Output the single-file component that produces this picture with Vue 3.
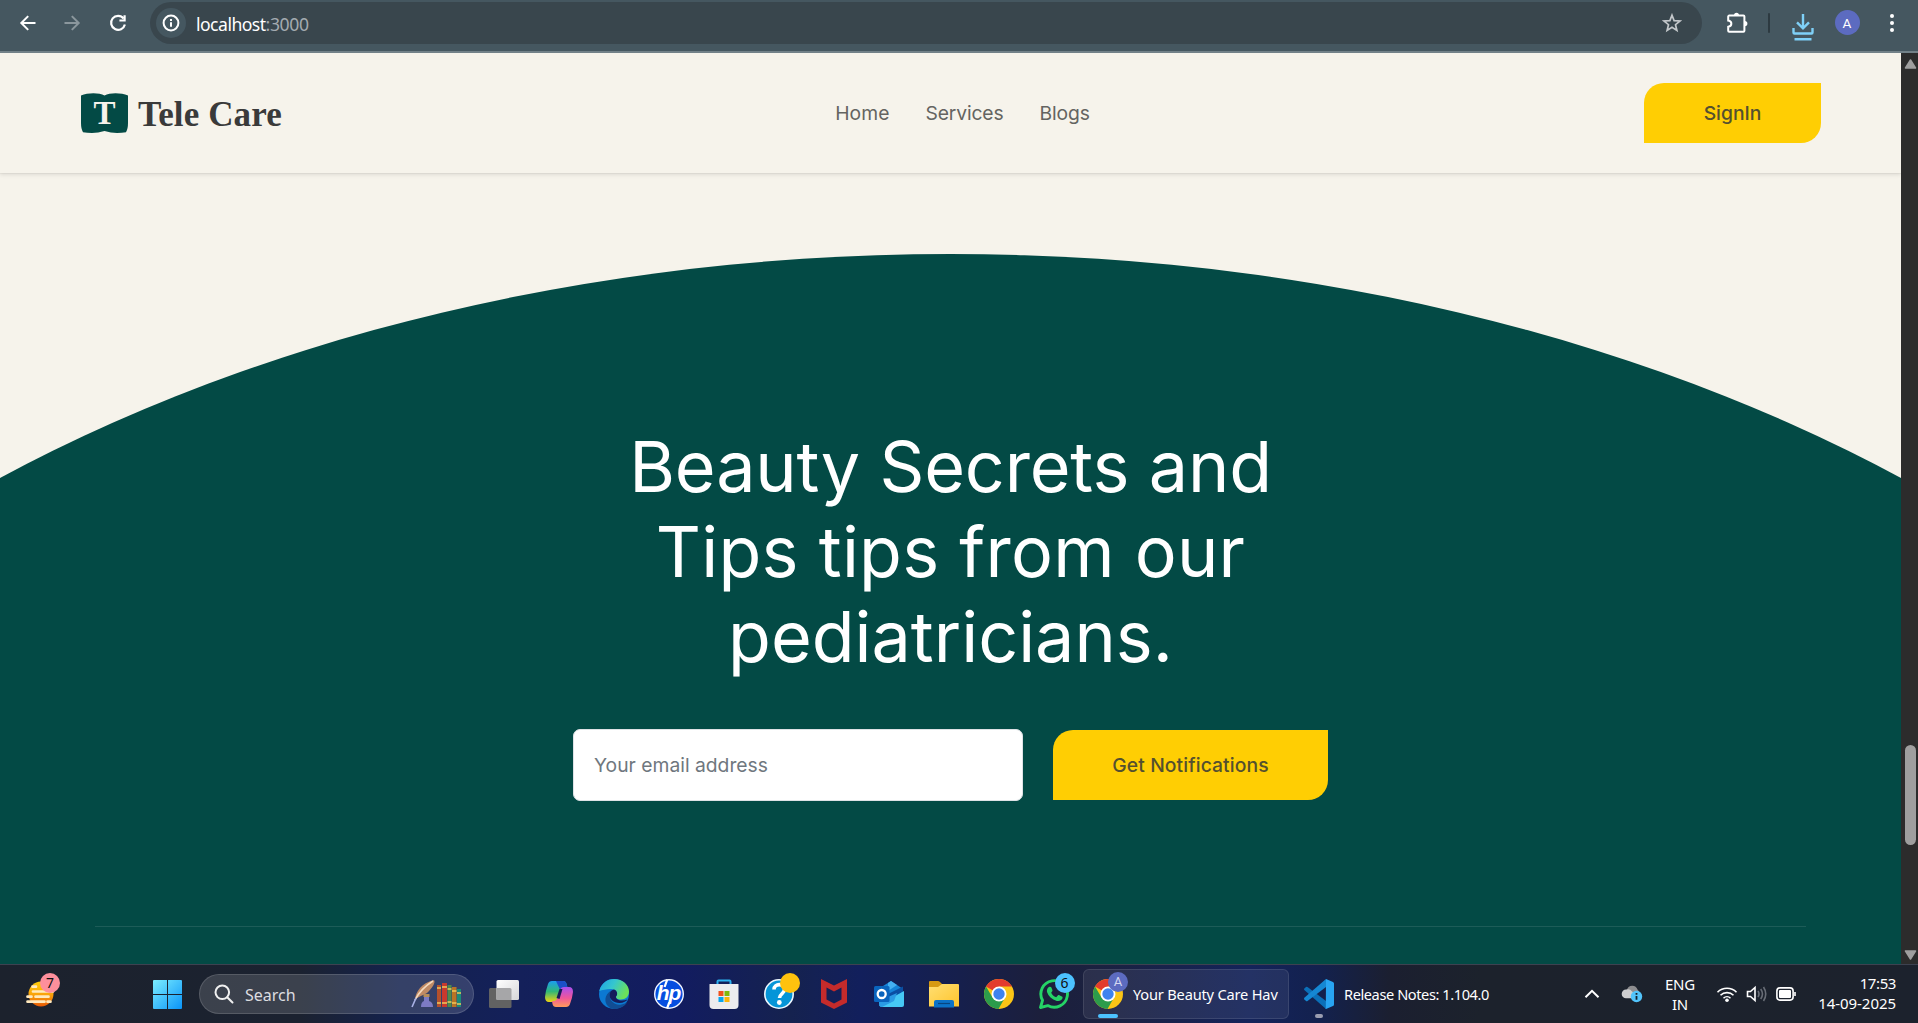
<script setup>
const links = ['Home', 'Services', 'Blogs']
const headline = [
  { text: 'Beauty Secrets and', cls: 'tight' },
  { text: 'Tips tips from our', cls: 'wide' },
  { text: 'pediatricians.', cls: 'last' },
]
</script>

<template>
  <div class="screen">
    <div class="toolbar">
      <svg class="ic back" viewBox="0 0 20 20"><path d="M17.500 10H3.800M10.200 3.100 3.300 10l6.900 6.900" /></svg>
      <svg class="ic fwd" viewBox="0 0 20 20"><path d="M2.500 10h13.700M9.800 3.100l6.900 6.900-6.900 6.900" /></svg>
      <svg class="ic reload" viewBox="0 0 20 20"><path d="M15.600 5.500A7 7 0 1 0 16.900 11.500" /><path d="M16.600 2.300v5.200h-5.200" /></svg>
      <div class="omnibox">
        <span class="info">
          <svg viewBox="0 0 20 20"><circle cx="10" cy="10" r="7.400" /><path d="M10 9.200v4.600M10 6v1.900" /></svg>
        </span>
        <span class="url"><b>localhost</b><i>:3000</i></span>
        <svg class="star" viewBox="0 0 20 20"><path d="M10 2.200l2.100 5.400 5.900.4-4.500 3.700 1.400 5.700-4.900-3.100-4.900 3.100 1.400-5.700L2 8l5.900-.4z" /></svg>
      </div>
      <svg class="ext" viewBox="0 0 22 22"><path class="line" d="M3.200 3.600h14.200a1 1 0 0 1 1 1v14.200a1 1 0 0 1-1 1H3.200a1 1 0 0 1-1-1v-4c4.200-.8 4.200-5.400 0-6.200v-4a1 1 0 0 1 1-1z" /><path class="solid" d="M8 3.200a2.500 2.500 0 0 1 5 0zM18.800 9a2.600 2.600 0 0 1 0 5.200z" /></svg>
      <span class="sep"></span>
      <svg class="dl" viewBox="0 0 22 28"><path d="M11 1v14M5 9.400l6 6 6-6M1.500 15v4.500a1 1 0 0 0 1 1h17a1 1 0 0 0 1-1V15M2.500 26.200h17" /></svg>
      <span class="avatar">A</span>
      <svg class="dots" viewBox="0 0 6 20"><circle cx="3" cy="3" r="2" /><circle cx="3" cy="10" r="2" /><circle cx="3" cy="17" r="2" /></svg>
    </div>

    <div class="viewport">
      <div class="page">
        <header class="header">
          <div class="logo">
            <svg viewBox="0 0 47 40"><path d="M0 2.500C7-.6 18-.6 23.500 2.400 29-.6 40-.6 47 2.500V30q0 6-2 9.200-4 .8-9 .8-6 0-12.500-2Q17 40 11 40q-5 0-9-.8Q0 36 0 30z" /><text x="23.500" y="31" text-anchor="middle">T</text></svg>
            <span class="brand">Tele Care</span>
          </div>
          <nav class="nav"><a v-for="l in links" :key="l" :class="l.toLowerCase()">{{ l }}</a></nav>
          <button class="btn sign">SignIn</button>
        </header>
        <section class="hero">
          <h1 class="title"><span v-for="h in headline" :key="h.text" :class="h.cls">{{ h.text }}</span></h1>
          <div class="form">
            <div class="field">Your email address</div>
            <button class="btn notify">Get Notifications</button>
          </div>
          <div class="rule"></div>
        </section>
      </div>
      <div class="scrollbar">
        <svg class="arrow" viewBox="0 0 12 10"><path d="M6 1 11 9H1z" /></svg>
        <div class="thumb"></div>
        <svg class="arrow down" viewBox="0 0 12 10"><path d="M6 9 1 1h10z" /></svg>
      </div>
    </div>

    <div class="taskbar">
      <div class="widget">
        <svg viewBox="0 0 30 30">
          <defs><linearGradient id="sun" x1="0" y1="0" x2="0" y2="1"><stop offset="0" stop-color="#ffcc0a" /><stop offset=".5" stop-color="#faa50a" /><stop offset="1" stop-color="#e85a06" /></linearGradient></defs>
          <circle cx="16" cy="15" r="12.500" fill="url(#sun)" />
          <path d="M7.500 7.700h3.500M8 12.500h20M2.500 17.700h4M10.500 17.700h13M2.500 22.700h17M22.500 22.700h3" stroke="#ffe9bd" stroke-width="2.700" stroke-linecap="round" />
        </svg>
        <span class="badge pink">7</span>
      </div>
      <svg class="start" viewBox="0 0 29 29">
        <defs><linearGradient id="win" x1="0" y1="0" x2="1" y2="1"><stop offset="0" stop-color="#7ceeff" /><stop offset="1" stop-color="#0a94f8" /></linearGradient></defs>
        <path fill="url(#win)" d="M1 0h13v14H0V1q0-1 1-1zM15 0h13q1 0 1 1v13H15zM0 15h14v14H1q-1 0-1-1zM15 15h14v13q0 1-1 1H15z" />
      </svg>
      <div class="search">
        <svg class="lens" viewBox="0 0 20 20"><circle cx="8.300" cy="8.300" r="6.800" /><path d="M13.200 13.200l5.300 5.300" /></svg>
        <span>Search</span>
        <svg class="books" viewBox="0 0 50 28">
          <path d="M4 19C5 12 10 3 23 0c2 3-2 8-7 13-3 2-7 3-10 5z" fill="#c08a64" />
          <path d="M4 20C8 12 14 6 22 1" stroke="#f4d9bd" stroke-width="1.600" fill="none" />
          <path d="M1 27l4-9" stroke="#a9b2e6" stroke-width="1.600" />
          <path d="M13 17h5v4q4 1 4 6H10q0-5 3-6z" fill="#7d7bc4" /><path d="M12.500 14h6v3h-6z" fill="#b78d5a" />
          <path d="M26 5h4v22h-4z" fill="#b4502c" /><path d="M31 3h5v24h-5z" fill="#c8392e" /><path d="M36.500 5h4v22h-4z" fill="#4d8a4c" /><path d="M41 7h4.500v20H41z" fill="#b87425" /><path d="M46 9h4v18h-4z" fill="#1b8a78" />
          <path d="M26 8h4M26 23h4M31 7h5M31 23h5M36.500 9h4M36.500 22h4M41 11h4.500M41 23h4.500M46 13h4M46 24h4" stroke="#efc75b" stroke-width="1.600" />
        </svg>
      </div>
      <div class="apps">
        <span class="slot">
          <svg viewBox="0 0 32 32"><defs><linearGradient id="tv" x1="0" y1="0" x2="1" y2="1"><stop offset="0" stop-color="#fff" /><stop offset="1" stop-color="#d7d7d9" /></linearGradient></defs><path d="M1 11.500q0-1.500 1.500-1.500H23.500V28.500q0 1.500-1.500 1.500H2.500Q1 30 1 28.500z" fill="#626262" /><rect x="8.500" y="2" width="22.500" height="20" rx="1.500" fill="url(#tv)" /><path d="M8.500 10h13.500q1.500 0 1.500 1.500V22h-15z" fill="#a6a6a8" /></svg>
        </span>
        <span class="slot">
          <svg viewBox="0 0 32 32">
            <defs>
              <linearGradient id="cp1" x1="0" y1="0" x2="0" y2="1"><stop offset="0" stop-color="#1c9df0" /><stop offset=".5" stop-color="#30b877" /><stop offset="1" stop-color="#efd411" /></linearGradient>
              <linearGradient id="cp2" x1="0" y1="0" x2="0" y2="1"><stop offset="0" stop-color="#a94ff0" /><stop offset=".55" stop-color="#f0569a" /><stop offset="1" stop-color="#ff9b5a" /></linearGradient>
            </defs>
            <path d="M9 3h11c2 0 3 1 3.600 3l1 4h-4q-2 0-3 3l-2.500 8q-1 3-4 3H6q-4 0-4-5 .5-6 3-13 1-3 4-3z" fill="url(#cp1)" />
            <path d="M13 3h7c2 0 3 1 3.600 3l1 4h-4q-2 0-3 3z" fill="#1b4fc8" />
            <path d="M23 29H13c-2 0-3-1-3.500-3L9 23h2.500q2 0 3-3l2.500-8q1-3 4-3h5q4 0 4 5-.5 5-3 12-1 3-4 3z" fill="url(#cp2)" />
            <path d="M13.500 20l3-9h3l-3 10z" fill="#141d56" />
          </svg>
        </span>
        <span class="slot">
          <svg viewBox="0 0 32 32">
            <defs><linearGradient id="ed" x1="0" y1="0" x2="1" y2=".4"><stop offset="0" stop-color="#1da4e6" /><stop offset=".5" stop-color="#35c6cf" /><stop offset="1" stop-color="#6be05a" /></linearGradient></defs>
            <circle cx="16" cy="16" r="15" fill="#0c79d2" />
            <path d="M1.300 13C3 5.500 9 1 16 1c9 0 15 6 15 12.500 0 5-3.500 8-8 8-3.500 0-5.500-1.500-5-3 2-1.500 1.500-7.500-5-7.500-5 0-9 1-11.700 2z" fill="url(#ed)" />
            <path d="M11.500 17c0 6 6 11 12 9.500 2.500-.6 4.500-1.700 5.700-2.300C26.500 28.500 21.500 31 16 31 9 30 6 24 8 18.500c1-3 3.500-5 6-6.500-1.500 1-2.500 3-2.500 5z" fill="#114d94" />
            <path d="M18 18.500c2-1.500 1.500-6-2-7-3 .5-4.500 3-4.500 5.500 0 4 4 8 10 8 4 0 7-2 8-3.500-7 2.500-12 0-11.500-3z" fill="#141c5c" />
          </svg>
        </span>
        <span class="slot">
          <svg viewBox="0 0 32 32"><circle cx="16" cy="16" r="14.300" fill="#064ee0" stroke="#f3f6ff" stroke-width="1.400" /><text class="hp" x="15.500" y="21.500" text-anchor="middle">hp</text><path d="M11.600 9l2.600-7.300M16.300 24.500l-2.300 6" stroke="#fff" stroke-width="2.200" /></svg>
        </span>
        <span class="slot">
          <svg viewBox="0 0 32 32"><path d="M9.500 7V3.500q0-1 1-1h11q1 0 1 1V7" fill="none" stroke="#2cb0ee" stroke-width="2" /><path d="M2 6h28q.5 0 .5.500V27q0 4-4 4h-21q-4 0-4-4V6.500Q1.500 6 2 6z" fill="#ececee" /><path d="M10.500 13h5v5h-5z" fill="#f1511b" /><path d="M16.500 13h5v5h-5z" fill="#80b80a" /><path d="M10.500 19h5v5h-5z" fill="#06a5ee" /><path d="M16.500 19h5v5h-5z" fill="#fbb50a" /></svg>
        </span>
        <span class="slot">
          <svg viewBox="0 0 32 32"><circle cx="16" cy="16" r="14.200" fill="#0595d8" stroke="#eef8ff" stroke-width="1.600" /><path d="M11 11.500c0-6.500 10.500-6.500 10.500 0 0 4-5 4.500-5 8.500" fill="none" stroke="#fff" stroke-width="3.600" /><circle cx="16.300" cy="24.500" r="2.400" fill="#fff" /></svg>
          <span class="badge amber"></span>
        </span>
        <span class="slot">
          <svg viewBox="0 0 32 32"><path d="M3 1l13 6.500L29 1v23.500L16 31 3 24.500zM8.500 9.500v12L16 25.500l7.500-4v-12L16 13.500z" fill="#c52b2b" fill-rule="evenodd" /></svg>
        </span>
        <span class="slot">
          <svg viewBox="0 0 32 32"><path d="M18 3l12 8v6L10 24V8z" fill="#1583d8" /><path d="M18 3l6 4-9 6V5z" fill="#44b0f2" /><path d="M30 8.500v6L15 22v-6z" fill="#0a4fa3" /><path d="M31 13v14q0 2-2 2H9q-2 0-3-2z" fill="#46c8f4" /><path d="M6 23l18-8-3 8-12 6q-3 0-3-3z" fill="#2a9be4" /><rect x="1" y="8" width="15.500" height="16" rx="1.500" fill="#0a64bd" /><circle cx="8.700" cy="16" r="4" fill="none" stroke="#fff" stroke-width="2.300" /></svg>
        </span>
        <span class="slot">
          <svg viewBox="0 0 32 32"><defs><linearGradient id="fd" x1="0" y1="0" x2="1" y2="1"><stop offset="0" stop-color="#ffdf73" /><stop offset="1" stop-color="#ffc42c" /></linearGradient></defs><path d="M1 4q0-1 1-1h8q1 0 2 1l2 2v5H1z" fill="#d79a12" /><path d="M1 9h9l4-3h16q1 0 1 1v21.500H1z" fill="url(#fd)" /><path d="M6 29.500V24q0-2 2-2h16q2 0 2 2v5.500z" fill="#0c72c8" /><path d="M10 25.500h12" stroke="#08457f" stroke-width="1.200" /></svg>
        </span>
        <span class="slot">
          <svg viewBox="0 0 32 32"><g id="chrome"><circle cx="16" cy="16" r="15" fill="#fbc516" /><path d="M16 16 3 8.500A15 15 0 0 1 29 8.500H16z" fill="#e33b2e" /><path d="M3 8.500A15 15 0 0 0 15.500 31l6.500-11.500L9.500 19.500z" fill="#2c9c4b" /><circle cx="16" cy="16" r="7.500" fill="#fff" /><circle cx="16" cy="16" r="5.700" fill="#3f83ee" /></g></svg>
        </span>
        <span class="slot">
          <svg viewBox="0 0 32 32"><path d="M2.500 29.500l2-7.200A13.300 13.300 0 1 1 9.800 27.600z" fill="none" stroke="#25d366" stroke-width="2.900" stroke-linejoin="round" /><path d="M11 9c1-.6 2-.3 2.400.6l1 2.500c.3 1-.2 1.500-1.200 2.600 1 2 2.500 3.500 5 4.600l1.600-1.800c.5-.5 1-.5 1.600-.2l2.500 1.300c.8.400.8 1 .5 2-.7 2-3.400 3-5.600 2.300-5-1.500-8.400-4.700-9.800-9C8.500 12 9.500 9.800 11 9z" fill="#25d366" /></svg>
          <span class="badge sky">6</span>
        </span>
      </div>
      <div class="task active">
        <span class="tico"><svg viewBox="0 0 32 32"><use href="#chrome" /></svg><span class="badge face">A</span><i class="mark on"></i></span>
        <span class="t1">Your Beauty Care Hav</span>
      </div>
      <div class="task code">
        <span class="tico"><svg viewBox="0 0 32 32"><path d="M4.500 9 23 23v8L1.300 12q-.6-.7 0-1.400L3 9q.7-.6 1.500 0z" fill="#0b6fb8" /><path d="M23 1L1.300 19.800q-.6.700 0 1.400L3 23q.7.600 1.500 0L23 9z" fill="#1587d3" /><path d="M23 1l7 3q1 .5 1 1.500v21q0 1-1 1.500l-7 3q-1 0-.2-1z" fill="#28a4f2" /></svg><i class="mark"></i></span>
        <span class="t2">Release Notes: 1.104.0</span>
      </div>
      <div class="tray">
        <svg class="chev" viewBox="0 0 16 10"><path d="M1.500 8.300 8 1.800l6.500 6.500" /></svg>
        <svg class="cloud" viewBox="0 0 22 20"><path d="M6 5.500a5.500 5.500 0 0 1 10.500 0l2.500 3-6 3z" fill="#8d8d8f" /><path d="M5 14.200a4.300 4.300 0 0 1 0-8.600Q9 4.500 11 7.500l6 3.500-6 3.200z" fill="#cfcfd0" /><circle cx="15.500" cy="12.500" r="5.700" fill="#52c4fb" /><path d="M15.500 12v3.800M15.500 9v1.700" stroke="#14202c" stroke-width="1.800" /></svg>
        <div class="lang"><span>ENG</span><span>IN</span></div>
        <svg class="wifi" viewBox="0 0 22 18"><path d="M1.500 7.200a13.500 13.500 0 0 1 19 0M4.500 10.300a9.200 9.200 0 0 1 13 0M7.500 13.200a5 5 0 0 1 7 0" /><circle cx="11" cy="15.300" r="1.800" /></svg>
        <svg class="vol" viewBox="0 0 22 18"><path d="M1.500 6.500h3L9 2.500v13L4.500 11.500h-3z" /><path class="dim" d="M12 6q2 3 0 6M14.700 4q3.500 5 0 10M17.500 2q4.500 7 0 14" /></svg>
        <svg class="bat" viewBox="0 0 21 14"><rect x=".9" y=".9" width="16.200" height="12.200" rx="3" /><rect class="fill" x="3" y="3" width="12" height="8" rx="1" /><path d="M19 5v4" /></svg>
        <div class="clock"><span class="time">17:53</span><span>14-09-2025</span></div>
      </div>
    </div>
  </div>
</template>

<style>
body { overflow: hidden; }
</style>

<style scoped>
.screen { width: 1918px; height: 1023px; display: flex; flex-direction: column; font-family: "Noto Sans", sans-serif; }

.toolbar { height: 53px; box-sizing: border-box; background: #455760; border-bottom: 2px solid #728188; display: flex; align-items: flex-start; }
.ic { width: 20px; height: 20px; margin-top: 12.500px; fill: none; stroke: #fff; stroke-width: 2; }
.back { margin-left: 17.500px; }
.fwd { margin-left: 24.500px; stroke: #8b979d; }
.reload { margin-left: 25.500px; stroke-width: 2.200; }
.omnibox { width: 1552px; height: 42px; margin: 2px 0 0 22.500px; box-sizing: border-box; border-radius: 21px; background: #39464d; display: flex; align-items: center; padding: 0 20px 0 6px; }
.info { width: 30px; height: 30px; border-radius: 50%; background: #455760; display: flex; align-items: center; justify-content: center; }
.info svg { width: 20px; height: 20px; fill: none; stroke: #fff; stroke-width: 2; }
.url { margin: 1px 0 0 10px; font-size: 17.600px; line-height: 24px; color: #fff; flex: 1; }
.url b { font-weight: 400; letter-spacing: -0.530px; }
.url i { font-style: normal; color: #a4abb0; letter-spacing: -0.400px; }
.star { width: 20px; height: 20px; fill: none; stroke: #c3c7ca; stroke-width: 1.700; }
.ext { width: 22px; height: 22px; margin: 11.500px 0 0 23.500px; }
.ext .line { fill: none; stroke: #fff; stroke-width: 2; }
.ext .solid { fill: #fff; }
.sep { width: 2px; height: 20px; margin: 13px 0 0 20px; border-radius: 1px; background: #2d3a41; }
.dl { width: 22px; height: 28px; margin: 12.500px 0 0 22px; fill: none; stroke: #7fd0f7; stroke-width: 2.400; }
.avatar { width: 25px; height: 25px; margin: 10px 0 0 21px; border-radius: 50%; background: #5c6bc0; color: #fff; font: 13.500px/26px Roboto, sans-serif; text-align: center; }
.dots { width: 6px; height: 20px; margin: 12.500px 0 0 29px; fill: #fff; }

.viewport { height: 911px; display: flex; background: #2c2c2c; }
.page { width: 1901px; background: #f6f3eb; font-family: Inter, sans-serif; overflow: hidden; }
.header { height: 120px; box-sizing: border-box; padding: 0 80px 0 81px; display: flex; justify-content: space-between; align-items: center; box-shadow: 0 2px 4px rgba(0,0,0,.09), 0 1px 1px rgba(0,0,0,.04); }
.logo { width: 200px; display: flex; gap: 10px; align-items: center; }
.logo svg { width: 47px; height: 40px; fill: #034a45; flex: none; }
.logo text { font: 700 33px "Liberation Serif", serif; fill: #f6f3eb; }
.brand { font: 700 35px/40px "Liberation Serif", serif; color: #3a3a3a; white-space: nowrap; padding-top: 3px; letter-spacing: .1px; }
.nav { display: flex; gap: 36px; font-size: 19.300px; color: #646461; }
.home { letter-spacing: .1px; }
.services { letter-spacing: -.15px; }
.blogs { letter-spacing: -.1px; }
.btn { border: 0; background: #ffce03; color: #54502f; border-radius: 20px 0 20px 0; font: 450 19.300px Inter, sans-serif; padding: 0; }
.sign { width: 177px; height: 60px; }

.hero { margin-top: 81px; height: 710px; box-sizing: border-box; padding-top: 170px; background: #034a45; clip-path: ellipse(1507px 1000px at 50% 1000px); }
.title { margin: 0; color: #fff; font-weight: 400; font-size: 70px; line-height: 85px; text-align: center; }
.title span { display: block; }
.tight { letter-spacing: -.15px; }
.wide { letter-spacing: .25px; }
.last { letter-spacing: 0; }
.form { width: 755px; margin: 50px auto 0; display: flex; justify-content: space-between; align-items: center; }
.field { width: 450px; height: 72px; box-sizing: border-box; padding-left: 20px; border: 1px solid #dee2e6; border-radius: 7px; background: #fff; color: #6f777e; font-size: 19.300px; line-height: 70px; }
.notify { width: 275px; height: 70px; letter-spacing: .1px; }
.rule { height: 1px; margin: 125px 95px 0; background: #1d5c58; }

.scrollbar { width: 17px; display: flex; flex-direction: column; align-items: center; padding-top: 6px; box-sizing: border-box; }
.arrow { width: 13px; height: 10px; fill: #9f9f9f; stroke: #9f9f9f; stroke-width: 1.500; stroke-linejoin: round; margin-left: 2px; }
.thumb { width: 11px; height: 100px; margin: 676px 0 105px 1px; border-radius: 6px; background: #9f9f9f; }

.taskbar { height: 59px; box-sizing: border-box; border-top: 1px solid #3d4250; background: linear-gradient(90deg, #1c222d 0, #1b2230 300px, #14224e 400px, #14205a 520px, #121c60 680px, #15224f 790px, #121f5c 860px, #161f4c 960px, #1c1f3c 1040px, #1b2140 1100px, #14235a 1250px, #13214e 1320px, #1b1f30 1390px, #1c222c 1480px, #1c222d 100%); display: flex; color: #fff; }
.badge { position: absolute; width: 20px; height: 20px; border-radius: 50%; color: #111; font-size: 14px; line-height: 20px; text-align: center; }
.widget { position: relative; width: 30px; height: 30px; margin: 14px 0 0 25px; }
.widget svg { width: 30px; height: 30px; }
.pink { background: #fd8f9c; left: 15px; top: -6px; }
.amber { background: #ffc20e; left: 28.500px; top: 8px; }
.sky { background: #4cc2ff; left: 28.500px; top: 8px; }
.face { background: #5c6bc0; left: 16px; top: -6px; color: #d4d8f2; font: 13px/20px Roboto, sans-serif; }
.start { width: 29px; height: 29px; margin: 15px 0 0 98px; }
.search { width: 275px; height: 40px; box-sizing: border-box; margin: 9px 0 0 17px; border: 1px solid rgba(255,255,255,.14); border-radius: 20px; background: rgba(255,255,255,.14); display: flex; align-items: center; padding: 0 12px 0 14px; font-size: 16px; color: #dcdde0; }
.search span { margin: 1px 0 0 11px; flex: 1; }
.lens { width: 20px; height: 20px; fill: none; stroke: #f0f0f0; stroke-width: 2; stroke-linecap: round; }
.books { width: 50px; height: 28px; }
.apps { display: flex; margin-left: 2px; }
.slot { position: relative; width: 55px; height: 58px; }
.slot svg { width: 32px; height: 32px; margin: 13px 0 0 11.500px; display: block; }
.hp { font: italic 700 21px "Liberation Sans Narrow", "Liberation Sans", sans-serif; fill: #fff; letter-spacing: -1px; }
.task { display: flex; align-items: center; white-space: nowrap; font-size: 14.600px; box-sizing: border-box; }
.active { width: 206px; height: 50px; margin: 4px 0 0 2px; border: 1px solid rgba(255,255,255,.1); border-radius: 6px; background: rgba(255,255,255,.07); padding-left: 8px; }
.code { width: 190px; height: 50px; margin: 4px 0 0 14px; }
.tico { position: relative; width: 32px; height: 32px; flex: none; }
.tico svg { width: 32px; height: 32px; display: block; }
.mark { position: absolute; width: 8px; height: 4px; border-radius: 2px; background: #9a9db0; left: 12px; top: 36px; }
.mark.on { width: 20px; left: 6px; background: #4cc2ff; }
.t1 { margin-left: 9px; letter-spacing: -.18px; }
.t2 { margin-left: 9px; letter-spacing: -.42px; }
.tray { flex: 1; display: flex; justify-content: flex-start; font-size: 15px; line-height: 20px; }
.tray svg { fill: none; stroke: #fff; stroke-width: 1.600; flex: none; }
.chev { width: 16px; height: 10px; margin: 24px 0 0 91px; }
.tray .chev { stroke-width: 2; }
.tray .cloud { width: 22px; height: 20px; margin: 19px 0 0 21px; stroke: none; }
.lang { width: 40px; margin: 9px 0 0 17px; display: flex; flex-direction: column; text-align: center; letter-spacing: -.2px; }
.wifi { width: 22px; height: 18px; margin: 20px 0 0 16px; }
.wifi circle { fill: #fff; stroke: none; }
.vol { width: 22px; height: 18px; margin: 20px 0 0 8px; }
.dim { stroke: #686d76; }
.bat { width: 21px; height: 14px; margin: 22px 0 0 8px; }
.bat .fill { fill: #fff; stroke: none; }
.clock { margin: 8px 22px 0 auto; display: flex; flex-direction: column; text-align: right; letter-spacing: -.05px; }
.time { letter-spacing: -.4px; }
</style>
